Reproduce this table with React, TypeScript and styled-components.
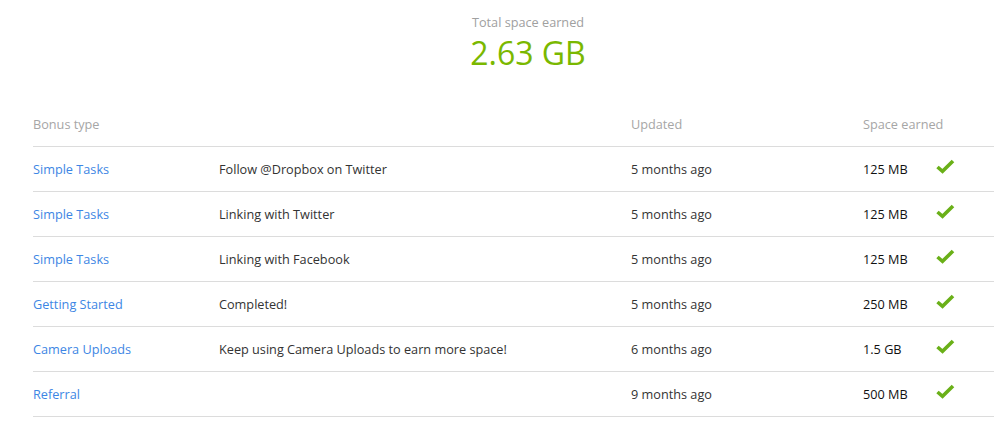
import React from "react";
import styled, { createGlobalStyle } from "styled-components";

const Global = createGlobalStyle`
  html, body { margin: 0; padding: 0; background: #fff; overflow: hidden; }
  body { font-family: "Open Sans", "Liberation Sans", sans-serif; font-size: 12.7px; color: #333; }
`;

const Page = styled.div`
  width: 990px;
  padding-left: 33px;
`;

const Summary = styled.div`
  height: 102px;
  display: flex;
  flex-direction: column;
  align-items: center;
  padding-top: 13px;
  box-sizing: border-box;
`;

const SummaryLabel = styled.div`
  color: #a0a0a0;
  font-size: 12.7px;
  line-height: 18px;
`;

const SummaryValue = styled.div`
  color: #7ab800;
  font-size: 32px;
  line-height: 40px;
  margin-top: 2px;
`;

const Row = styled.div<{ $header?: boolean }>`
  display: grid;
  grid-template-columns: 186px 412px 232px 73px 1fr;
  align-items: center;
  height: 45px;
  border-bottom: 1px solid #dcdcdc;
  box-sizing: border-box;
  white-space: nowrap;
  color: ${(p) => (p.$header ? "#a6a6a6" : "#333")};
`;

const Cell = styled.div``;

const TypeLink = styled.a`
  color: #3d86e4;
  text-decoration: none;
`;

const Amount = styled.div`
  color: #111;
`;

const CheckBox = styled.div`
  display: flex;
  margin: -5px 0 0 -1px;
`;

const Check = () => (
  <svg width="20" height="15" viewBox="0 0 20 15">
    <path d="M2.5 8 L7.5 12.3 L18 2" fill="none" stroke="#6ab018" strokeWidth="3.6" strokeLinejoin="miter" strokeLinecap="butt" />
  </svg>
);

const rows = [
  ["Simple Tasks", "Follow @Dropbox on Twitter", "5 months ago", "125 MB"],
  ["Simple Tasks", "Linking with Twitter", "5 months ago", "125 MB"],
  ["Simple Tasks", "Linking with Facebook", "5 months ago", "125 MB"],
  ["Getting Started", "Completed!", "5 months ago", "250 MB"],
  ["Camera Uploads", "Keep using Camera Uploads to earn more space!", "6 months ago", "1.5 GB"],
  ["Referral", "", "9 months ago", "500 MB"],
];

export default function App() {
  return (
    <>
      <Global />
      <Page>
        <Summary>
          <SummaryLabel>Total space earned</SummaryLabel>
          <SummaryValue>2.63 GB</SummaryValue>
        </Summary>
        <Row $header>
          <Cell>Bonus type</Cell>
          <Cell />
          <Cell>Updated</Cell>
          <Cell>Space earned</Cell>
          <Cell />
        </Row>
        {rows.map((r, i) => (
          <Row key={i}>
            <Cell><TypeLink href="#">{r[0]}</TypeLink></Cell>
            <Cell>{r[1]}</Cell>
            <Cell>{r[2]}</Cell>
            <Amount>{r[3]}</Amount>
            <CheckBox><Check /></CheckBox>
          </Row>
        ))}
      </Page>
    </>
  );
}
